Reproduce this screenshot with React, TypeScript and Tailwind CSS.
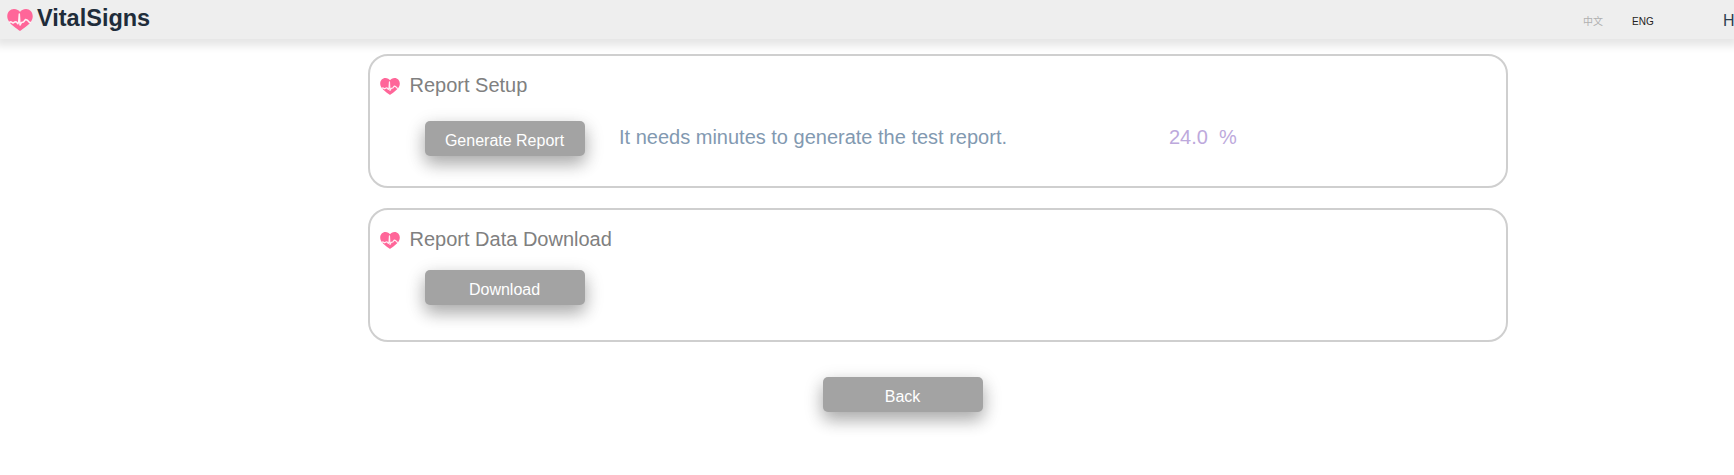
import React from 'react'

const buttonClass =
  'block h-[35px] w-40 rounded-[5px] bg-[#a3a3a3] pr-px text-center text-base leading-[39px] text-white shadow-[0_8px_16px_0_rgba(0,0,0,0.2),0_6px_20px_0_rgba(0,0,0,0.19)]'

function HeartIcon({ className }: { className: string }) {
  return (
    <svg viewBox="0 0 26 22" className={className} fill="none">
      <path
        d="M13 22C10.5 20 2.5 15.5 0.7 10C-1 4.5 2.5 0 7 0C9.8 0 12 1.4 13 3C14 1.4 16.2 0 19 0C23.5 0 27 4.5 25.3 10C23.5 15.5 15.5 20 13 22Z"
        fill="#ff6699"
      />
      <path
        d="M2 13.5L4 12.8L6 14L8 12.8L9.5 13L10.8 14.8L11.7 13L12.3 5L13 16L14.5 13.5L16.5 13L18.5 10.5L20.5 11.2L22 13L24 14"
        stroke="#fff0f5"
        strokeWidth="1.5"
        strokeLinejoin="round"
      />
    </svg>
  )
}

function Panel({ title, children }: { title: string; children: React.ReactNode }) {
  return (
    <section className="h-[134px] rounded-[20px] border-2 border-[#cfcfcf]">
      <div className="flex h-[58px] items-center pl-[10px]">
        <HeartIcon className="mt-[3px] h-[17px] w-5" />
        <h2 className="ml-[9.5px] text-xl text-[#808080]">{title}</h2>
      </div>
      {children}
    </section>
  )
}

export default function App() {
  return (
    <div className="h-[475px] overflow-hidden bg-white font-['Liberation_Sans',Arial,sans-serif]">
      {/* Top bar */}
      <header className="flex h-[39px] items-center whitespace-nowrap bg-[#eeeeee] pl-[7px] shadow-[0_3px_8px_4px_rgba(0,0,0,0.1)]">
        <HeartIcon className="h-[22px] w-[26px] shrink-0" />
        <span className="mb-px ml-1 text-[23.5px] font-bold text-[#202c3a]">VitalSigns</span>
        <nav className="ml-auto flex h-full w-[151px] shrink-0 items-center overflow-hidden">
          <span className="mt-1 w-[49px] shrink-0 font-['Liberation_Sans','Noto_Sans_CJK_SC',sans-serif] text-[10px] text-[#b0b0b0]">中文</span>
          <span className="mt-1 w-[91px] shrink-0 text-[10px] text-[#222222]">ENG</span>
          <span className="mt-0.5 shrink-0 text-base text-[#2c3e50]">H</span>
        </nav>
      </header>

      <main className="ml-[368px] mt-[15px] flex w-[1140px] flex-col gap-5">
        <Panel title="Report Setup">
          <div className="ml-[55px] mt-[7px] flex">
            <button className={buttonClass}>Generate Report</button>
            <p className="ml-[34px] w-[550px] text-xl leading-[33px] text-[#8299b1]">
              It needs minutes to generate the test report.
            </p>
            <p className="whitespace-pre text-xl leading-[33px] text-[#bda9dc]">{'24.0  %'}</p>
          </div>
        </Panel>

        <Panel title="Report Data Download">
          <button className={`${buttonClass} ml-[55px] mt-0.5`}>Download</button>
        </Panel>

        <button className={`${buttonClass} ml-[455px] mt-[15px]`}>Back</button>
      </main>
    </div>
  )
}
